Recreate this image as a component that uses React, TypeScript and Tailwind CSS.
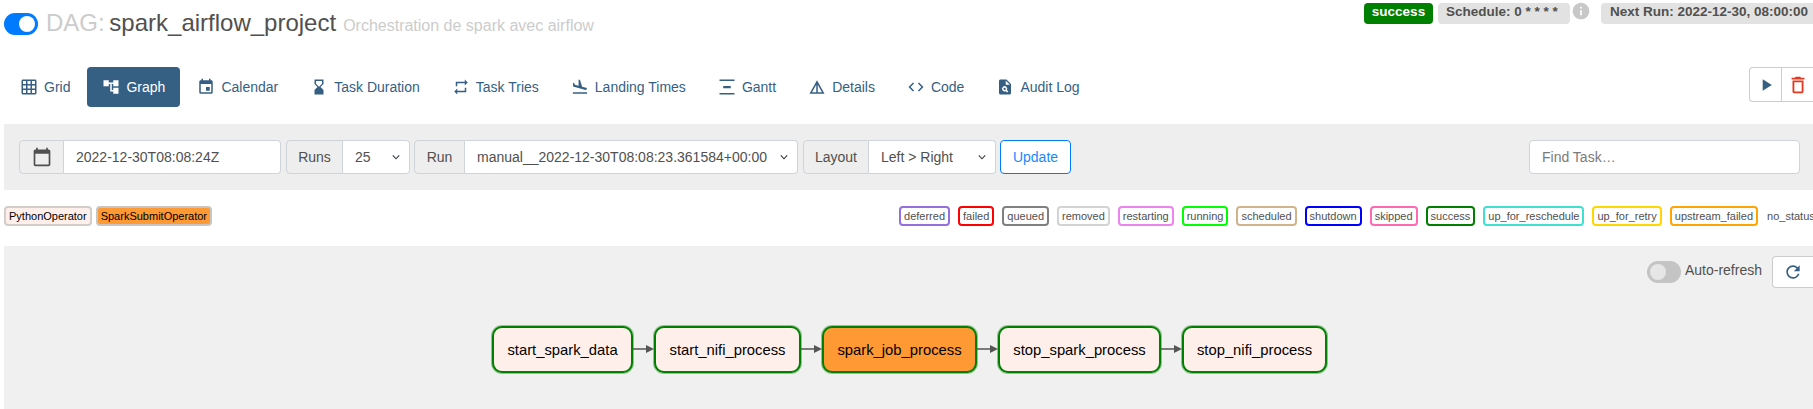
import React from "react";
import {
  MdGridOn, MdAccountTree, MdEvent, MdHourglassBottom, MdRepeat, MdFlightLand,
  MdVerticalDistribute, MdDetails, MdCode, MdPlagiarism, MdPlayArrow, MdDeleteOutline,
  MdRefresh, MdInfo, MdCalendarToday,
} from "react-icons/md";

const tabs = [
  { label: "Grid", Icon: MdGridOn },
  { label: "Graph", Icon: MdAccountTree, active: true },
  { label: "Calendar", Icon: MdEvent },
  { label: "Task Duration", Icon: MdHourglassBottom },
  { label: "Task Tries", Icon: MdRepeat },
  { label: "Landing Times", Icon: MdFlightLand },
  { label: "Gantt", Icon: MdVerticalDistribute },
  { label: "Details", Icon: MdDetails },
  { label: "Code", Icon: MdCode },
  { label: "Audit Log", Icon: MdPlagiarism },
];

const states = [
  { label: "deferred", c: "px-[3px] border-2 border-[#9370db]" },
  { label: "failed", c: "px-[3px] border-2 border-[#ff0000]" },
  { label: "queued", c: "px-[3px] border-2 border-[#808080]" },
  { label: "removed", c: "px-[3px] border-2 border-[#d3d3d3]" },
  { label: "restarting", c: "px-[3px] border-2 border-[#ee82ee]" },
  { label: "running", c: "px-[3px] border-2 border-[#00ff00]" },
  { label: "scheduled", c: "px-[3px] border-2 border-[#d2b48c]" },
  { label: "shutdown", c: "px-[3px] border-2 border-[#0000ff]" },
  { label: "skipped", c: "px-[3px] border-2 border-[#ff69b4]" },
  { label: "success", c: "px-[3px] border-2 border-[#008000]" },
  { label: "up_for_reschedule", c: "px-[3px] border-2 border-[#40e0d0]" },
  { label: "up_for_retry", c: "px-[3px] border-2 border-[#ffd700]" },
  { label: "upstream_failed", c: "px-[3px] border-2 border-[#ffa500]" },
  { label: "no_status", c: "pt-[2px] ml-[1px]" },
];

const nodes = [
  { label: "start_spark_data", w: "w-[141px]" },
  { label: "start_nifi_process", w: "w-[147px]" },
  { label: "spark_job_process", w: "w-[155px]", spark: true },
  { label: "stop_spark_process", w: "w-[163px]" },
  { label: "stop_nifi_process", w: "w-[145px]", last: true },
];

function Chevron() {
  return (
    <svg width="8" height="10" viewBox="0 0 4 5" className="shrink-0">
      <path d="M0.4 1.7 L2 3.4 L3.6 1.7" fill="none" stroke="#343a40" strokeWidth="0.55" />
    </svg>
  );
}

function Addon({ w, children }: { w: string; children: React.ReactNode }) {
  return (
    <div className={`${w} h-full flex items-center justify-center bg-[#eeeeee] border border-[#ced4da] rounded-l-[4px] text-[#51504f] text-[14px]`}>
      {children}
    </div>
  );
}

function Select({ w, label }: { w: string; label: string }) {
  return (
    <div className={`${w} h-full flex items-center justify-between pl-3 pr-[9px] bg-white border border-l-0 border-[#ced4da] rounded-r-[4px] text-[#51504f] text-[14px] whitespace-nowrap`}>
      <span>{label}</span>
      <Chevron />
    </div>
  );
}

export default function App() {
  return (
    <div className="w-[1813px] h-[409px] overflow-hidden bg-white text-[#51504f] font-['Liberation_Sans',Arial,sans-serif]">
      {/* Header */}
      <div className="h-[67px] flex items-start justify-between">
        <div className="flex items-start pl-1">
          <div className="w-[34px] h-[22px] mt-[13px] rounded-full bg-[#007bff] flex items-center justify-end pr-[3px]">
            <div className="w-[16px] h-[16px] rounded-full bg-white" />
          </div>
          <div className="ml-[8px] mt-[8px] text-[24px] leading-[29px] whitespace-nowrap">
            <span className="text-[#cccccc] mr-[-2px]">DAG: </span>
            <span className="text-[#51504f]">spark_airflow_project</span>
            <span className="text-[#cccccc] text-[16px] ml-[7px]">Orchestration de spark avec airflow</span>
          </div>
        </div>
        <div className="flex items-start pt-[3px] text-[13.5px] font-bold leading-[16px]">
          <div className="w-[69px] h-[21px] rounded-[4px] bg-[#008000] text-white text-center pt-[1px]">success</div>
          <div className="w-[132px] h-[21px] ml-[5px] rounded-[4px] bg-[#e2e2e2] pl-2 pt-[1px] whitespace-nowrap">Schedule: 0 * * * *</div>
          <MdInfo className="ml-[1px] -mt-[2px] text-[#c8c8c8]" size={20} />
          <div className="w-[212px] h-[21px] ml-[10px] bg-[#e2e2e2] rounded-l-[4px] pl-[9px] pt-[1px] whitespace-nowrap">Next Run: 2022-12-30, 08:00:00</div>
        </div>
      </div>

      {/* Tabs */}
      <div className="h-[57px] flex items-start justify-between">
        <div className="flex pl-1">
          {tabs.map(({ label, Icon, active }) => (
            <div
              key={label}
              className={`h-[40px] flex items-center gap-[6px] rounded-[4px] text-[14px] whitespace-nowrap ${active ? "mx-[1px] px-[15px] bg-[#365f84] text-white" : "px-4 text-[#365f84]"}`}
            >
              <Icon size={18} />
              <span>{label}</span>
            </div>
          ))}
        </div>
        <div className="w-[64px] h-[35px] flex border border-r-0 border-[#cccccc] rounded-l-[4px]">
          <div className="w-[32px] flex items-center justify-center border-r border-[#cccccc] text-[#365f84]">
            <MdPlayArrow size={20} />
          </div>
          <div className="flex-1 flex items-center justify-center text-[#e43921]">
            <MdDeleteOutline size={22} />
          </div>
        </div>
      </div>

      {/* Filter bar */}
      <div className="ml-1 h-[66px] bg-[#eeeeee] flex items-center pl-[15px] pr-[13px]">
        <div className="h-[34px] flex">
          <Addon w="w-[45px]"><MdCalendarToday size={20} className="text-[#51504f]" /></Addon>
          <input
            readOnly
            defaultValue="2022-12-30T08:08:24Z"
            className="w-[217px] h-full pl-3 bg-white border border-l-0 border-[#ced4da] rounded-r-[4px] text-[#51504f] text-[14px] outline-none"
          />
        </div>
        <div className="h-[34px] flex ml-[5px]">
          <Addon w="w-[57px]">Runs</Addon>
          <Select w="w-[67px]" label="25" />
        </div>
        <div className="h-[34px] flex ml-[4px]">
          <Addon w="w-[51px]">Run</Addon>
          <Select w="w-[333px]" label="manual__2022-12-30T08:08:23.361584+00:00" />
        </div>
        <div className="h-[34px] flex ml-[5px]">
          <Addon w="w-[66px]">Layout</Addon>
          <Select w="w-[127px]" label="Left > Right" />
        </div>
        <div className="w-[71px] h-[34px] ml-[4px] flex items-center justify-center bg-white border border-[#007bff] rounded-[4px] text-[#1a88ff] text-[14px]">
          Update
        </div>
        <input
          placeholder="Find Task…"
          className="w-[271px] h-[34px] ml-auto px-3 bg-white border border-[#ced4da] rounded-[4px] text-[14px] outline-none placeholder:text-[#7b7b7b]"
        />
      </div>

      {/* Legend */}
      <div className="h-[56px] pt-[16px] pl-1 flex items-start text-[11px] leading-[16px] whitespace-nowrap">
        <div className="flex gap-[4px] text-black">
          <div className="h-[20px] px-[3px] border-2 border-[#d2cccb] rounded-[4px] bg-[#ffefeb]">PythonOperator</div>
          <div className="h-[20px] px-[3px] border-2 border-[#c6c6c6] rounded-[4px] bg-[#ff9933]">SparkSubmitOperator</div>
        </div>
        <div className="flex gap-[8px] ml-[687px] text-[#51504f]">
          {states.map(({ label, c }) => (
            <div key={label} className={`h-[20px] rounded-[4px] ${c}`}>{label}</div>
          ))}
        </div>
      </div>

      {/* Graph */}
      <div className="ml-1 h-[163px] bg-[#f0f0f0] flex flex-col">
        <div className="flex items-start justify-end pt-[10px] h-[80px]">
          <div className="flex items-center h-[22px] mt-[5px]">
            <div className="w-[34px] h-[22px] rounded-full bg-[#c4c4c4] flex items-center pl-[3px]">
              <div className="w-[16px] h-[16px] rounded-full bg-[#e6e6e6]" />
            </div>
            <span className="ml-[4px] -mt-[4px] text-[14px] text-[#51504f]">Auto-refresh</span>
          </div>
          <div className="w-[41px] h-[32px] ml-[10px] bg-white border border-r-0 border-[#cccccc] rounded-l-[4px] flex items-center justify-center text-[#365f84]">
            <MdRefresh size={20} />
          </div>
        </div>
        <div className="flex pl-[488px]">
          {nodes.map(({ label, w, spark, last }) => (
            <React.Fragment key={label}>
              <div
                className={`${w} h-[47px] flex items-center justify-center pt-[2px] border-2 border-[#008000] shadow-[0_0_0_1px_rgba(0,128,0,0.4)] rounded-[10px] text-[14.8px] text-black whitespace-nowrap ${spark ? "bg-[#ff9933]" : "bg-[#ffefeb]"}`}
              >
                {label}
              </div>
              {!last && (
                <svg width="21" height="47" viewBox="0 0 21 47" className="shrink-0">
                  <path d="M0 23 H14" stroke="#555555" strokeWidth="1.5" />
                  <path d="M13 19 L21 23 L13 27 Z" fill="#555555" />
                </svg>
              )}
            </React.Fragment>
          ))}
        </div>
      </div>
    </div>
  );
}
